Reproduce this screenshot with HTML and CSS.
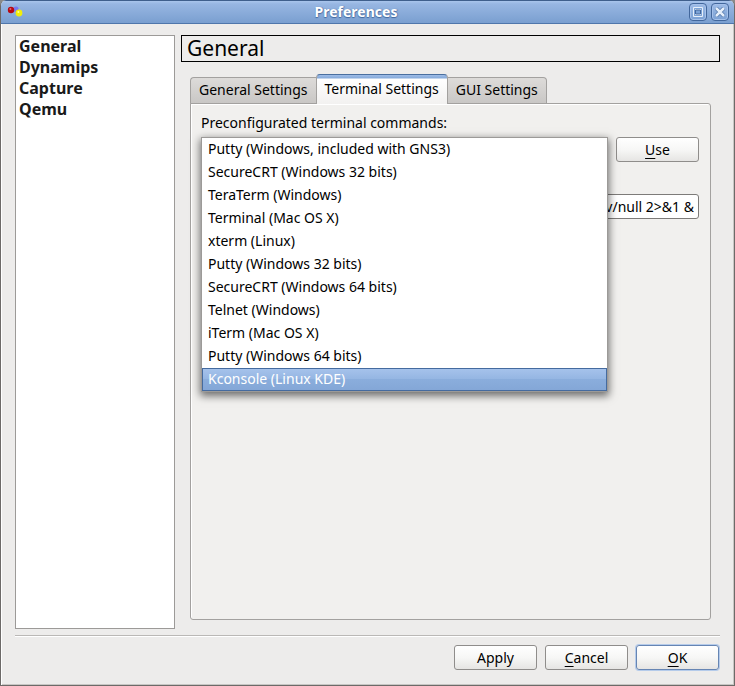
FILE: index.html
```html
<!DOCTYPE html>
<html lang="en">
<head>
<meta charset="utf-8">
<title>Preferences</title>
<link rel="stylesheet" href="styles.css">
</head>
<body>
<div class="window">
  <header class="titlebar">
    <svg class="app-icon" width="16" height="14" viewBox="0 0 16 14" aria-hidden="true">
      <path d="M4 5 9 3l3 5z" fill="none" stroke="#8d8fc0"/>
      <circle cx="9" cy="4" r="2.6" fill="#7779ee"/>
      <circle cx="4" cy="5" r="3.200" fill="#b50812"/>
      <circle cx="12" cy="8" r="3.400" fill="#f2ee08"/>
      <circle cx="3.4" cy="4" r="1" fill="#e06a70"/>
      <circle cx="11.4" cy="7" r="1" fill="#ffffa0"/>
    </svg>
    <h1 class="title">Preferences</h1>
    <div class="window-buttons">
      <button class="window-button" type="button" aria-label="Maximize">
        <svg width="10" height="10" viewBox="0 0 10 10"><path d="M.5.5h9v9h-9z" fill="none" stroke="#e6effa"/><path d="M1.500 1.500h7v7h-7z" fill="#e6effa" stroke="#7ba2d6"/><path d="M2.500 3h5v4h-5z" fill="#7ba2d6" stroke="#42679c"/></svg>
      </button>
      <button class="window-button" type="button" aria-label="Close">
        <svg width="10" height="10" viewBox="0 0 10 10"><path d="M1 1l8 8M9 1L1 9" stroke="#4a70a6" stroke-width="4"/><path d="M1 1l8 8M9 1L1 9" stroke="#e6effa" stroke-width="2.500"/></svg>
      </button>
    </div>
  </header>
  <main class="body">
    <div class="columns">
      <nav class="sections">
        <a href="#general">General</a>
        <a href="#dynamips">Dynamips</a>
        <a href="#capture">Capture</a>
        <a href="#qemu">Qemu</a>
      </nav>
      <section class="page">
        <h2 class="page-title">General</h2>
        <div class="tabbed">
          <div class="tabs" role="tablist">
            <button class="tab" type="button" role="tab">General Settings</button>
            <button class="tab active" type="button" role="tab" aria-selected="true">Terminal Settings</button>
            <button class="tab" type="button" role="tab">GUI Settings</button>
          </div>
          <div class="panel" role="tabpanel">
            <label class="label" for="presets">Preconfigurated terminal commands:</label>
            <div class="preset-row">
              <div class="combo">
                <select id="presets" class="popup" size="11">
                  <option>Putty (Windows, included with GNS3)</option>
                  <option>SecureCRT (Windows 32 bits)</option>
                  <option>TeraTerm (Windows)</option>
                  <option>Terminal (Mac OS X)</option>
                  <option>xterm (Linux)</option>
                  <option>Putty (Windows 32 bits)</option>
                  <option>SecureCRT (Windows 64 bits)</option>
                  <option>Telnet (Windows)</option>
                  <option>iTerm (Mac OS X)</option>
                  <option>Putty (Windows 64 bits)</option>
                  <option selected>Kconsole (Linux KDE)</option>
                </select>
              </div>
              <button class="button" type="button"><span class="key">U</span>se</button>
            </div>
            <input class="command" type="text" aria-label="Terminal command" value="v/null 2&gt;&amp;1 &amp;">
          </div>
        </div>
      </section>
    </div>
    <footer class="actions">
      <button class="button" type="button">Apply</button>
      <button class="button" type="button"><span class="key">C</span>ancel</button>
      <button class="button default" type="button"><span class="key">O</span>K</button>
    </footer>
  </main>
</div>
</body>
</html>
```
FILE: styles.css
```css
* { box-sizing: border-box; }

body {
  margin: 0;
  background: #8a8a88;
  color: #000;
  font: 14px/20px "Noto Sans", "Open Sans", sans-serif;
}

button, input, select { font: inherit; color: inherit; margin: 0; }

.window {
  display: flex;
  flex-direction: column;
  height: 100vh;
  border: 1px solid #6d6a68;
  border-top: 0;
  border-radius: 6px 6px 0 0;
  background: #edeceb;
  box-shadow: inset 1px 0 #fff, inset -1px -1px #c8c6c4;
  overflow: hidden;
}

.titlebar {
  display: flex;
  align-items: center;
  flex: none;
  height: 24px;
  padding: 0 5px 0 6px;
  border-top: 1px solid #3f5f8c;
  border-bottom: 1px solid #4f76ab;
  background: linear-gradient(#a9c5ec, #97b6e2 3px, #7a9fd0);
}

.title {
  flex: 1;
  margin: 0;
  color: #fff;
  font-size: 14px;
  line-height: 20px;
  text-align: center;
  text-shadow: 0 1px 1px #3f669d, 1px 0 1px #5a80b5;
}

.window-buttons { display: flex; gap: 4px; }

.window-button {
  display: flex;
  align-items: center;
  justify-content: center;
  width: 18px;
  height: 18px;
  padding: 0;
  border: 1px solid #42679c;
  border-radius: 4px;
  background: linear-gradient(#9dbbe6, #7ba1d4);
  box-shadow: inset 0 0 0 1px #a5c1ea;
}

.window-button svg { flex: none; }

.body {
  flex: 1;
  display: flex;
  flex-direction: column;
  min-height: 0;
  padding: 11px 14px 15px;
}

.columns { flex: 1; display: flex; gap: 6px; min-height: 0; }

.sections {
  display: flex;
  flex-direction: column;
  flex: none;
  width: 160px;
  padding: 0 3px;
  border: 1px solid #9c9a98;
  background: #fff;
}

.sections a {
  color: #1a1a1a;
  font-size: 16px;
  font-weight: 700;
  line-height: 21px;
  text-decoration: none;
}

.page { flex: 1; display: flex; flex-direction: column; min-width: 0; }

.page-title {
  margin: 0;
  padding: 0 5px;
  border: 1px solid #000;
  font-size: 21px;
  font-weight: 400;
  line-height: 25px;
}

.tabbed {
  flex: 1;
  display: flex;
  flex-direction: column;
  padding: 12px 9px 9px;
}

.tabs { display: flex; align-items: flex-end; }

.tab {
  height: 27px;
  margin-bottom: -1px;
  padding: 0 8px 2px;
  border: 1px solid #a3a19f;
  border-radius: 4px 4px 0 0;
  background: linear-gradient(#dddbd9, #c9c7c5);
}

.tab:first-child { border-right: 0; border-top-right-radius: 0; }
.tab:last-child { border-left: 0; border-top-left-radius: 0; }

.tab.active {
  height: 30px;
  border-top-color: #4a6f9f;
  border-bottom: 0;
  background: linear-gradient(#9fbde8, #86aada 3px, #fff 4px, #f2f1f0);
  z-index: 1;
}

.panel {
  flex: 1;
  padding: 9px 11px;
  border: 1px solid #a3a19f;
  border-radius: 0 3px 3px 3px;
  background: #f1f0ee;
  box-shadow: inset 1px 1px #fff;
}

.label { display: block; line-height: 20px; margin-left: -1px; }

.preset-row { display: flex; gap: 8px; margin: 4px 0 32px -1px; }

.combo { flex: 1; position: relative; }

.popup {
  position: absolute;
  top: 0;
  left: 0;
  width: 100%;
  height: 255px;
  padding: 0;
  border: 1px solid #9c9a98;
  border-radius: 0;
  outline: 0;
  background: #fff;
  box-shadow: 0 3px 8px 1px rgba(0, 0, 0, .55);
  overflow: hidden;
  z-index: 2;
}

.popup option {
  height: 23px;
  min-height: 23px;
  padding: 1px 6px 0;
  line-height: 23px;
}

.popup option:checked {
  padding: 0 5px;
  border: 1px solid #456b9f;
  background: linear-gradient(#a5c2eb, #94b5e2 50%, #8aaddc 50%, #84a7d7);
  color: #fff;
  -webkit-text-fill-color: #fff;
  line-height: 21px;
}

.button {
  width: 83px;
  height: 25px;
  padding: 0;
  border: 1px solid #8f8d8b;
  border-radius: 3px;
  background: linear-gradient(#fff, #f7f7f6 50%, #e6e5e3);
}

.button.default { border-color: #6685b3; box-shadow: 0 0 0 1px #b5cbea; }

.key { text-decoration: underline; text-underline-offset: 3px; text-decoration-skip-ink: none; }

.command {
  display: block;
  width: 100%;
  height: 25px;
  padding: 0 4px;
  border: 1px solid #7d7b79;
  border-radius: 3px;
  background: #fff;
  text-align: right;
}

.actions {
  display: flex;
  justify-content: flex-end;
  gap: 8px;
  margin-top: 6px;
  padding: 9px 1px 0 0;
  border-top: 1px solid #bab8b6;
  box-shadow: inset 0 1px #fff;
}
```
